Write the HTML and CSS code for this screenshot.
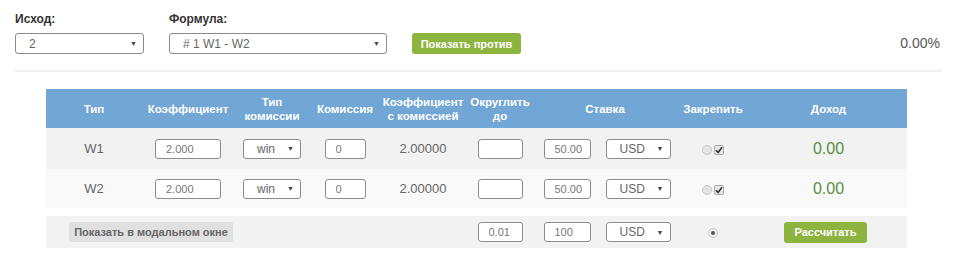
FILE: index.html
```html
<!DOCTYPE html>
<html lang="ru">
<head>
    <meta charset="UTF-8">
    <title>Калькулятор вилок</title>
    <link rel="stylesheet" href="styles.css">
</head>
<body>

<div class="page">
    <!-- Верхняя панель -->
    <div class="top-bar">
        <div class="field field-outcome">
            <label>Исход:</label>
            <div class="fake-select"><span>2</span><span class="arrow">&#9660;</span></div>
        </div>
        <div class="field field-formula">
            <label>Формула:</label>
            <div class="fake-select"><span># 1 W1 - W2</span><span class="arrow">&#9660;</span></div>
        </div>
        <button class="btn btn-green btn-against">Показать против</button>
        <div class="percent">0.00%</div>
    </div>

    <table class="calc-table">
        <colgroup>
            <col style="width:96px"><col style="width:92px"><col style="width:76px">
            <col style="width:70px"><col style="width:86px"><col style="width:68px">
            <col style="width:66px"><col style="width:76px"><col style="width:74px">
            <col style="width:157px">
        </colgroup>
        <thead>
            <tr>
                <th>Тип</th>
                <th>Коэффициент</th>
                <th>Тип<br>комиссии</th>
                <th>Комиссия</th>
                <th>Коэффициент<br>с комиссией</th>
                <th>Округлить<br>до</th>
                <th colspan="2">Ставка</th>
                <th>Закрепить</th>
                <th>Доход</th>
            </tr>
        </thead>
        <tbody>
            <tr class="row-odd">
                <td>W1</td>
                <td><input class="inp inp-coef" type="text" value="2.000"></td>
                <td><div class="fake-select small sel-win"><span>win</span><span class="arrow">&#9660;</span></div></td>
                <td><input class="inp inp-fee" type="text" value="0"></td>
                <td>2.00000</td>
                <td><input class="inp inp-round" type="text" value=""></td>
                <td><input class="inp inp-stake" type="text" value="50.00"></td>
                <td><div class="fake-select small sel-cur"><span>USD</span><span class="arrow">&#9660;</span></div></td>
                <td><span class="radio"></span><span class="check"><svg width="8" height="8" viewBox="0 0 8 8"><path d="M1 4.2 L3.1 6.4 L7 1.2" fill="none" stroke="#333" stroke-width="1.6"/></svg></span></td>
                <td class="income">0.00</td>
            </tr>
            <tr class="row-even">
                <td>W2</td>
                <td><input class="inp inp-coef" type="text" value="2.000"></td>
                <td><div class="fake-select small sel-win"><span>win</span><span class="arrow">&#9660;</span></div></td>
                <td><input class="inp inp-fee" type="text" value="0"></td>
                <td>2.00000</td>
                <td><input class="inp inp-round" type="text" value=""></td>
                <td><input class="inp inp-stake" type="text" value="50.00"></td>
                <td><div class="fake-select small sel-cur"><span>USD</span><span class="arrow">&#9660;</span></div></td>
                <td><span class="radio"></span><span class="check"><svg width="8" height="8" viewBox="0 0 8 8"><path d="M1 4.2 L3.1 6.4 L7 1.2" fill="none" stroke="#333" stroke-width="1.6"/></svg></span></td>
                <td class="income">0.00</td>
            </tr>
        </tbody>
        <tfoot>
            <tr class="row-foot">
                <td colspan="5" class="foot-left"><button class="btn btn-gray">Показать в модальном окне</button></td>
                <td><input class="inp inp-round" type="text" value="0.01"></td>
                <td><input class="inp inp-stake" type="text" value="100"></td>
                <td><div class="fake-select small sel-cur"><span>USD</span><span class="arrow">&#9660;</span></div></td>
                <td><span class="radio radio-on"></span></td>
                <td><button class="btn btn-green btn-calc">Рассчитать</button></td>
            </tr>
        </tfoot>
    </table>
</div>

</body>
</html>
```

FILE: styles.css
```css
body {
    margin: 0;
    font-family: "Liberation Sans", Arial, sans-serif;
    background-color: #fff;
    color: #555;
}
.page {
    padding: 12px 18px 0 15px;
}
.top-bar {
    display: flex;
    align-items: flex-end;
    padding-bottom: 16px;
    border-bottom: 2px solid #f0f0f0;
}
.field label {
    display: block;
    font-size: 12px;
    font-weight: bold;
    color: #333;
    line-height: 14px;
    margin-bottom: 7px;
}
.field-outcome {
    width: 129px;
    margin-right: 25px;
}
.field-formula {
    width: 218px;
    margin-right: 25px;
}
.fake-select {
    display: flex;
    justify-content: space-between;
    align-items: center;
    box-sizing: border-box;
    height: 21px;
    padding: 0 6px 0 13px;
    border: 1px solid #8c8c8c;
    border-radius: 3px;
    font-size: 12px;
    color: #666;
    background: #fff;
}
.fake-select .arrow {
    font-size: 7px;
    color: #444;
}
.fake-select.small {
    height: 20px;
    margin: 0 auto;
}
.sel-win {
    width: 58px;
}
.sel-cur {
    width: 65px;
}
.btn {
    font-family: "Liberation Sans", Arial, sans-serif;
    border: none;
    border-radius: 3px;
    padding: 0;
    white-space: nowrap;
    cursor: pointer;
}
.btn-green {
    background-color: #8db43f;
    color: #fff;
    font-size: 11px;
    font-weight: bold;
    height: 21px;
}
.btn-against {
    width: 109px;
}
.percent {
    margin-left: auto;
    font-size: 14px;
    color: #555;
    line-height: 21px;
    padding-right: 2px;
}
.calc-table {
    width: 861px;
    margin: 17px 0 0 31px;
    border-collapse: collapse;
    table-layout: fixed;
}
.calc-table th {
    background-color: #71a6d5;
    color: #fff;
    font-size: 11.5px;
    font-weight: bold;
    line-height: 14px;
    height: 39px;
    padding: 0;
    text-align: center;
}
.calc-table td {
    padding: 0;
    text-align: center;
    font-size: 13px;
    color: #666;
}
.row-odd td {
    background-color: #f2f2f2;
    height: 41px;
}
.row-even td {
    background-color: #f9f9f9;
    height: 39px;
}
.row-foot td {
    background-color: #f2f2f2;
    height: 32px;
    border-top: 8px solid #fff;
}
.inp {
    box-sizing: border-box;
    height: 20px;
    padding: 0 0 0 10px;
    border: 1px solid #8c8c8c;
    border-radius: 3px;
    font-family: "Liberation Sans", Arial, sans-serif;
    font-size: 11px;
    color: #777;
    vertical-align: middle;
}
.inp-coef {
    width: 66px;
}
.inp-fee {
    width: 41px;
}
.inp-round {
    width: 45px;
}
.inp-stake {
    width: 47px;
}
.radio {
    display: inline-block;
    box-sizing: border-box;
    width: 10px;
    height: 10px;
    border-radius: 50%;
    border: 1px solid #c8c8c8;
    background: #e4e4e4;
    vertical-align: middle;
    position: relative;
}
.radio-on {
    background: #f0f0f0;
}
.radio-on::after {
    content: "";
    position: absolute;
    left: 2px;
    top: 2px;
    width: 4px;
    height: 4px;
    border-radius: 50%;
    background: #555;
}
.check {
    display: inline-block;
    box-sizing: border-box;
    width: 10px;
    height: 10px;
    margin-left: 2px;
    border: 1px solid #aaa;
    border-radius: 2px;
    background: #e8e8e8;
    vertical-align: middle;
    line-height: 0;
}
.check svg {
    display: block;
}
.income {
    font-size: 16px !important;
    color: #55913f !important;
}
.foot-left {
    text-align: left !important;
    padding-left: 23px !important;
}
.btn-gray {
    background-color: #e0e0e0;
    color: #666;
    font-size: 11px;
    font-weight: bold;
    height: 20px;
    width: 164px;
    border-radius: 2px;
}
.btn-calc {
    width: 83px;
    margin-right: 6px;
}
```
